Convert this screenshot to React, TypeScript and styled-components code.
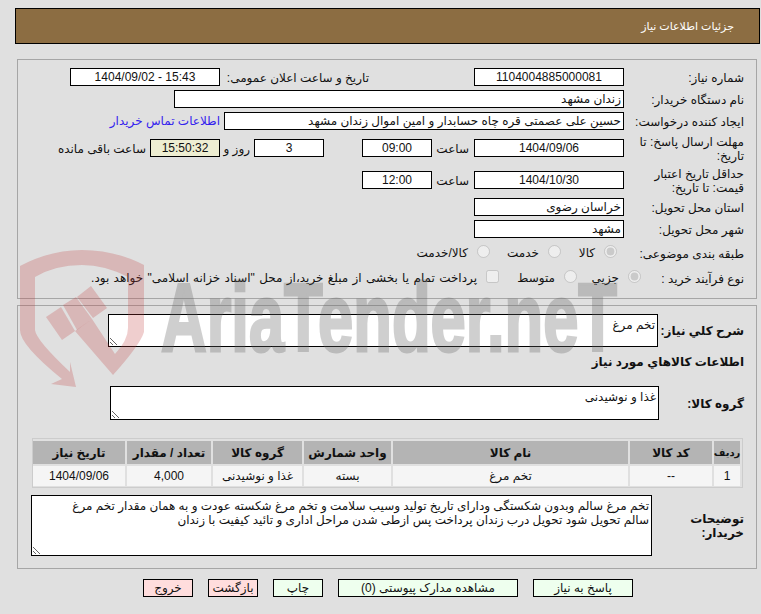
import React from "react";
import styled, { createGlobalStyle } from "styled-components";

const GlobalStyle = createGlobalStyle`
  html, body {
    margin: 0;
    padding: 0;
    background-color: #e0e0e0;
  }
  body {
    font-family: "Liberation Sans", "DejaVu Sans", sans-serif;
    font-size: 12px;
    color: #111;
  }
`;

const Page = styled.div`
  position: relative;
  width: 761px;
  height: 614px;
  box-sizing: border-box;
  padding: 8px 1px 0 15px;
  overflow: hidden;
  direction: rtl;
`;
const Header = styled.div`
  height: 36px;
  box-sizing: border-box;
  border: 1px solid #000;
  background-color: #8c6d42;
  color: #fff;
  display: flex;
  align-items: center;
  padding-right: 25px;
  font-size: 11px;
`;
const Panel = styled.div<{ $mt: number; $h: number; $gap?: number }>`
  margin: ${(p) => p.$mt}px 3px 0 2px;
  height: ${(p) => p.$h}px;
  box-sizing: border-box;
  border: 1px solid #a6a6a6;
  padding: 8px 12px 0 0;
  display: flex;
  flex-direction: column;
  gap: ${(p) => p.$gap ?? 0}px;
`;
const Row = styled.div<{ $h?: number }>`
  display: flex;
  align-items: center;
  height: ${(p) => p.$h ?? 18}px;
`;
const Label = styled.div<{ $w?: number; $bold?: boolean }>`
  width: ${(p) => p.$w ?? 120}px;
  flex-shrink: 0;
  padding-top: 1px;
  line-height: 14px;
  font-weight: ${(p) => (p.$bold ? 700 : 400)};
`;
const Field = styled.div<{ $w: number; $ms?: number; $right?: boolean; $bg?: string }>`
  width: ${(p) => p.$w}px;
  height: 18px;
  margin-right: ${(p) => p.$ms ?? 0}px;
  flex-shrink: 0;
  box-sizing: border-box;
  border: 1px solid #000;
  background-color: ${(p) => p.$bg ?? "#fff"};
  line-height: 16px;
  padding: 0 2px;
  text-align: ${(p) => (p.$right ? "right" : "center")};
  white-space: nowrap;
  overflow: hidden;
`;
const Caption = styled.div<{ $ms: number; $w?: number }>`
  margin-right: ${(p) => p.$ms}px;
  padding-top: 1px;
  width: ${(p) => (p.$w ? `${p.$w}px` : "auto")};
  flex-shrink: 0;
  white-space: nowrap;
`;
const ContactLink = styled.a`
  margin-right: 4px;
  color: #3322ee;
  white-space: nowrap;
`;
const Option = styled.label<{ $w: number; $wordGap?: number }>`
  width: ${(p) => p.$w}px;
  flex-shrink: 0;
  display: flex;
  align-items: center;
  gap: 9px;
  white-space: nowrap;
  word-spacing: ${(p) => p.$wordGap ?? 0}px;
`;
const Radio = styled.input`
  margin: 0 0 4px 0;
  width: 13px;
  height: 13px;
  flex-shrink: 0;
`;
const Heading = styled.div<{ $mt: number }>`
  margin-top: ${(p) => p.$mt}px;
  height: 16px;
  line-height: 16px;
  font-weight: 700;
`;
const TextBlockRow = styled.div<{ $mt?: number; $h: number }>`
  display: flex;
  align-items: center;
  margin-top: ${(p) => p.$mt ?? 0}px;
  height: ${(p) => p.$h}px;
`;
const TextBox = styled.textarea<{ $w: number; $h: number }>`
  width: ${(p) => p.$w}px;
  height: ${(p) => p.$h}px;
  box-sizing: border-box;
  border: 1px solid #000;
  border-radius: 0;
  outline: none;
  padding: 3px 2px 0;
  background-color: #fff;
  color: #111;
  font-family: inherit;
  font-size: 12px;
  line-height: 14px;
  direction: rtl;
  overflow: hidden;
`;
const ItemsTable = styled.div`
  margin: 18px 1px 0 0;
  width: 711px;
  height: 50px;
  box-sizing: border-box;
  border: 1px solid #cccccc;
  padding: 2px;
  display: grid;
  grid-template-columns: 26px 82px 235px 87px 89px 84px 92px;
  grid-template-rows: 23px 20px;
  gap: 2px;
`;
const HeadCell = styled.div<{ $narrow?: boolean }>`
  background-color: #b4b4b4;
  display: flex;
  align-items: center;
  justify-content: center;
  font-size: ${(p) => (p.$narrow ? 10 : 12)}px;
  font-weight: 700;
  white-space: nowrap;
`;
const BodyCell = styled.div`
  background-color: #f5f5f5;
  display: flex;
  align-items: center;
  justify-content: center;
  white-space: nowrap;
`;
const Buttons = styled.div`
  margin: 10px 0 0 0;
  padding-right: 127px;
  display: flex;
  gap: 15px;
`;
const ActionButton = styled.button<{ $w: number; $danger?: boolean }>`
  width: ${(p) => p.$w}px;
  height: 18px;
  box-sizing: border-box;
  border: 1px solid #000;
  border-radius: 0;
  padding: 0;
  background-color: ${(p) => (p.$danger ? "#ffdddd" : "#eeffee")};
  color: #111;
  font-family: inherit;
  font-size: 12px;
  line-height: 16px;
`;
const Watermark = styled.svg`
  position: absolute;
  top: 0;
  left: 0;
  pointer-events: none;
`;

const heads = ["ردیف", "کد کالا", "نام کالا", "واحد شمارش", "گروه کالا", "تعداد / مقدار", "تاریخ نیاز"];
const cells = ["1", "--", "تخم مرغ", "بسته", "غذا و نوشیدنی", "4,000", "1404/09/06"];

const description =
  "تخم مرغ سالم وبدون شکستگی ودارای تاریخ تولید وسیب سلامت و تخم مرغ شکسته عودت و به همان مقدار تخم مرغ\nسالم تحویل شود تحویل درب زندان پرداخت پس ازطی شدن مراحل اداری و تائید کیفیت با زندان";

function App() {
  return (
    <Page>
      <GlobalStyle />
      <Header>جزئیات اطلاعات نیاز</Header>

      <Panel $mt={15} $h={240} $gap={4}>
        <Row>
          <Label>شماره نیاز:</Label>
          <Field $w={150}>1104004885000081</Field>
          <Caption $ms={105} $w={149}>تاریخ و ساعت اعلان عمومی:</Caption>
          <Field $w={150}>15:43 - 1404/09/02</Field>
        </Row>
        <Row>
          <Label>نام دستگاه خریدار:</Label>
          <Field $w={450} $right>زندان مشهد</Field>
        </Row>
        <Row>
          <Label>ایجاد کننده درخواست:</Label>
          <Field $w={400} $right>حسین علی عصمتی قره چاه حسابدار و امین اموال زندان مشهد</Field>
          <ContactLink>اطلاعات تماس خریدار</ContactLink>
        </Row>
        <Row $h={28}>
          <Label>مهلت ارسال پاسخ: تا تاریخ:</Label>
          <Field $w={150}>1404/09/06</Field>
          <Caption $ms={5} $w={37}>ساعت</Caption>
          <Field $w={70}>09:00</Field>
          <Field $w={70} $ms={38}>3</Field>
          <Caption $ms={4} $w={30}>روز و</Caption>
          <Field $w={70} $bg="#eeeed2">15:50:32</Field>
          <Caption $ms={4}>ساعت باقی مانده</Caption>
        </Row>
        <Row $h={28}>
          <Label>حداقل تاریخ اعتبار قیمت: تا تاریخ:</Label>
          <Field $w={150}>1404/10/30</Field>
          <Caption $ms={5} $w={37}>ساعت</Caption>
          <Field $w={70}>12:00</Field>
        </Row>
        <Row>
          <Label>استان محل تحویل:</Label>
          <Field $w={150} $right>خراسان رضوی</Field>
        </Row>
        <Row>
          <Label>شهر محل تحویل:</Label>
          <Field $w={150} $right>مشهد</Field>
        </Row>
        <Row $h={22}>
          <Label $w={127}>طبقه بندی موضوعی:</Label>
          <Option $w={56}><Radio type="radio" name="cat" disabled defaultChecked />کالا</Option>
          <Option $w={71}><Radio type="radio" name="cat" disabled />خدمت</Option>
          <Option $w={90}><Radio type="radio" name="cat" disabled />کالا/خدمت</Option>
        </Row>
        <Row $h={20}>
          <Label $w={103}>نوع فرآیند خرید :</Label>
          <Option $w={64}><Radio type="radio" name="proc" disabled defaultChecked />جزيي</Option>
          <Option $w={78}><Radio type="radio" name="proc" disabled />متوسط</Option>
          <Option $w={400} $wordGap={1}>
            <Radio type="checkbox" disabled />
            پرداخت تمام یا بخشی از مبلغ خرید،از محل "اسناد خزانه اسلامی" خواهد بود.
          </Option>
        </Row>
      </Panel>

      <Panel $mt={6} $h={264}>
        <TextBlockRow $h={33}>
          <Label $w={86} $bold>شرح کلي نیاز:</Label>
          <TextBox $w={550} $h={33} readOnly defaultValue="تخم مرغ" />
        </TextBlockRow>
        <Heading $mt={7}>اطلاعات کالاهاي مورد نیاز</Heading>
        <TextBlockRow $mt={16} $h={34}>
          <Label $w={85} $bold>گروه کالا:</Label>
          <TextBox $w={549} $h={34} readOnly defaultValue="غذا و نوشیدنی" />
        </TextBlockRow>
        <ItemsTable>
          {heads.map((h, i) => (
            <HeadCell key={h} $narrow={i === 0}>{h}</HeadCell>
          ))}
          {cells.map((c) => (
            <BodyCell key={c}>{c}</BodyCell>
          ))}
        </ItemsTable>
        <TextBlockRow $mt={7} $h={61}>
          <Label $w={92} $bold>توضیحات خریدار:</Label>
          <TextBox $w={621} $h={61} readOnly defaultValue={description} />
        </TextBlockRow>
      </Panel>

      <Buttons>
        <ActionButton $w={100}>پاسخ به نیاز</ActionButton>
        <ActionButton $w={180}>مشاهده مدارک پیوستی (0)</ActionButton>
        <ActionButton $w={50}>چاپ</ActionButton>
        <ActionButton $w={50} $danger>بازگشت</ActionButton>
        <ActionButton $w={50} $danger>خروج</ActionButton>
      </Buttons>

      {/* site watermark, sits over the whole form */}
      <Watermark width={761} height={614} viewBox="0 0 761 614">
        <g fill="rgb(190,60,60)" fillOpacity={0.25}>
          <path
            fillRule="evenodd"
            d="M20 266 Q50 250 82 250 Q115 250 144 265 L144 332 Q140 345 113 375 L75 331 L92 319 L115 354 Q128 340 128 328 L128 277 Q105 265 82 265 Q55 265 35 277 L35 330 Q36 340 70 372 L70 362 L76 387 L51 384 L62 379 Q20 345 20 330 Z"
          />
          <path d="M46 317 L61 307 L75 331 L62 340 Z" />
          <path d="M77 297 L91 286 L107 308 L93 318 Z" />
          <path d="M63 305 L76 297 L92 319 L77 330 Z" />
        </g>
        <g opacity={0.3}>
          <text
            x={161}
            y={351}
            textLength={456}
            lengthAdjust="spacingAndGlyphs"
            direction="ltr"
            fontFamily="'Liberation Sans', sans-serif"
            fontWeight={700}
            fontSize={96}
            fill="rgb(100,100,100)"
            stroke="rgb(100,100,100)"
            strokeWidth={3}
          >
            AriaTender.neT
          </text>
        </g>
      </Watermark>
    </Page>
  );
}

export default App;
